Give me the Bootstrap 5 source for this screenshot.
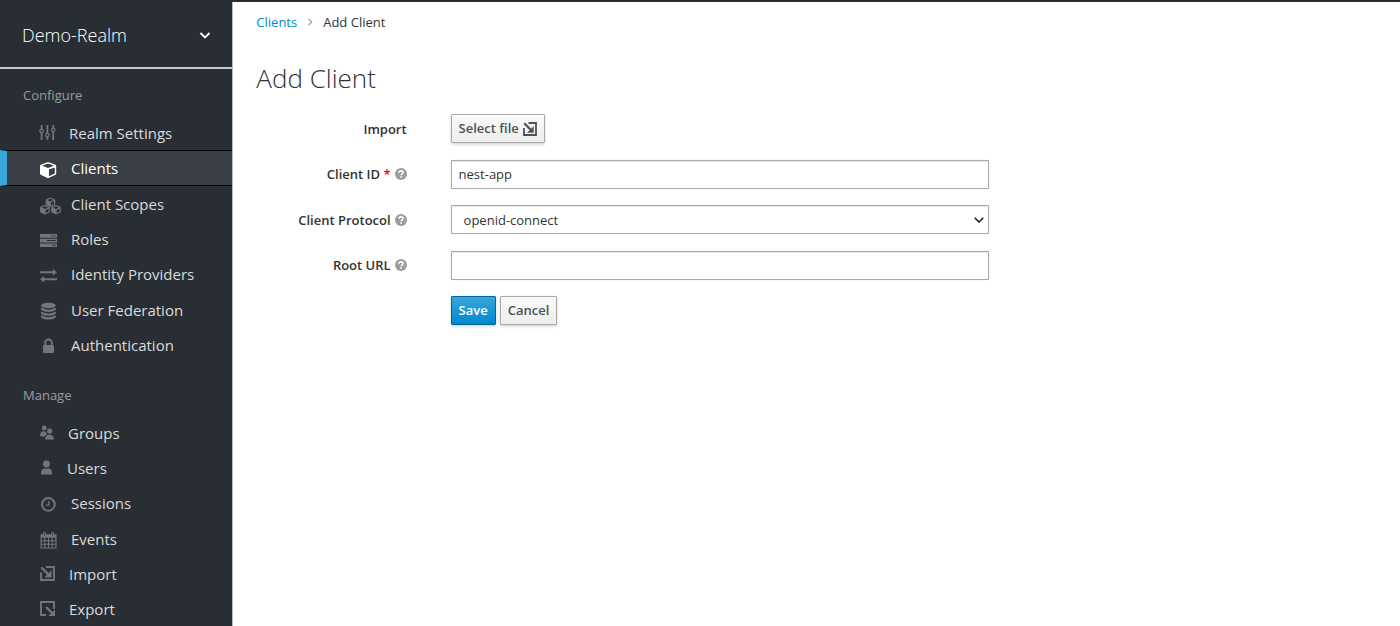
<!DOCTYPE html>
<html lang="en">
<head>
<meta charset="utf-8">
<meta name="viewport" content="width=device-width, initial-scale=1">
<title>Add Client</title>
<link href="https://cdn.jsdelivr.net/npm/bootstrap@5.3.0/dist/css/bootstrap.min.css" rel="stylesheet">
<style>
body { font-family: "Open Sans", "Noto Sans", sans-serif; font-size: 13px; line-height: 20px; color: #333; border-top: 2px solid #2b2b2b; }
.side-bar { background: #292e34; border-right: 1px solid #bbb; overflow-y: auto; scrollbar-width: none; }
.side-bar::-webkit-scrollbar { display: none; }
.realm-toggle { height: 67px; padding: 0 20px 0 22px; font-size: 18px; font-weight: 300; color: #fff; background: none; border: 0; border-bottom: 2px solid #c8c8c8; }
.side-title { margin: 0; padding: 16px 0 10px 23px; font-size: 13px; line-height: 20px; font-weight: 400; color: #9c9c9c; }
.side-list { display: grid; grid-auto-rows: 1fr; }
.list-configure { height: 248px; margin-bottom: 6px; }
.list-manage { height: 212px; }
.side-list a { display: flex; align-items: center; gap: 15px; height: 100%; padding-left: 40px; font-size: 15px; color: #dbdbdb; text-decoration: none; }
.side-list svg { flex: none; height: 22px; overflow: visible; fill: #72767b; color: #72767b; }
.side-list a.active { padding-left: 33px; color: #fff; background: #393f44; border-top: 1px solid #030303; border-bottom: 1px solid #030303; border-left: 7px solid #39a5dc; }
.side-list a.active svg { fill: #fff; color: #fff; }
.main-pane { padding: 10px 22px 10px 23px; }
.crumbs { gap: 10px; color: #333; }
.crumbs a { color: #0088ce; text-decoration: none; }
.page-title { margin: 29px 0 19px; font-size: 26px; line-height: 34px; font-weight: 300; }
.client-form { min-height: 211px; }
.client-form .row { --bs-gutter-x: 44px; }
.client-form label, .row-label { font-weight: 600; white-space: nowrap; }
.required-mark { color: #f00; }
.client-form .form-control, .client-form .form-select { height: 29px; padding: 3px 7px; font-size: 13px; line-height: 20px; color: #333; border: 1px solid #aaa; border-radius: 1px; box-shadow: inset 0 1px 1px rgba(3,3,3,.1), 0 0 1px rgba(3,3,3,.3); }
.client-form .form-select { padding-left: 12px; background-size: 10px 6px; background-position: right 4px center; background-image: url("data:image/svg+xml,%3Csvg xmlns='http://www.w3.org/2000/svg' viewBox='0 0 10 6'%3E%3Cpath d='M.7.7 5 5 9.3.7' fill='none' stroke='%23222' stroke-width='1.6'/%3E%3C/svg%3E"); }
.client-form .btn { height: 29px; padding: 3px 7px; font-size: 13px; line-height: 21px; font-weight: 600; border-width: 1px; border-radius: 1px; box-shadow: 0 0 1px rgba(3,3,3,.3), 0 2px 3px rgba(3,3,3,.12); }
.client-form .btn-plain { color: #4d5258; background: linear-gradient(#fafafa, #ededed); border-color: #aaa; }
.client-form .btn-save { color: #fff; background: linear-gradient(#39a5dc, #0088ce); border-color: #00659c; }
</style>
</head>
<body>
<svg class="d-none" aria-hidden="true">
  <symbol id="help" viewBox="0 0 12 12"><circle cx="6" cy="6" r="6" fill="#9c9c9c"/><path d="M4 4.7C4 3.4 4.9 2.9 6 2.9s2 .7 2 1.7C8 5.800 6.200 5.800 6.200 7.200" fill="none" stroke="#fff" stroke-width="1.600"/><path d="M5.300 8.200h1.700v1.600H5.300z" fill="#fff"/></symbol>
  <symbol id="import" viewBox="0 0 14 14"><path d="M5.500 1H13v12H1V6" fill="none" stroke="currentColor" stroke-width="1.800"/><path d="M1.200 1.200 8 8" fill="none" stroke="currentColor" stroke-width="2.200"/><path d="M10.700 4v6.700H4l2.400-2.300 2-2z" fill="currentColor"/></symbol>
</svg>
<div class="container-fluid vh-100 overflow-hidden">
<div class="row h-100">
  <nav class="side-bar col-2 h-100 p-0" aria-label="Realm">
    <button type="button" class="realm-toggle w-100 d-flex align-items-center justify-content-between">Demo-Realm
      <svg width="14" height="10" viewBox="0 0 14 10"><path d="M2.500 3 7 7.500 11.500 3" fill="none" stroke="#fff" stroke-width="1.800"/></svg>
    </button>
    <h2 class="side-title">Configure</h2>
    <ul class="side-list list-configure list-unstyled">
      <li><a href="#"><svg width="14"><path d="M1.600 3v15M7.400 3v15M13.200 3v15" stroke="currentColor" stroke-width="1.800"/><g stroke="currentColor" stroke-width="1.300" fill="#292e34"><circle cx="1.600" cy="9" r="1.700"/><circle cx="7.400" cy="13" r="1.700"/><circle cx="13.200" cy="8" r="1.700"/></g></svg>Realm Settings</a></li>
      <li><a href="#" class="active"><svg width="16"><path fill-rule="evenodd" d="M8 5 15.400 7.800q.8.3.8 1.200v7.600q0 .8-.7 1.200L8 21.300.7 17.800Q0 17.400 0 16.600V9q0-.9.8-1.200zM8 6.600 2.200 8.800 8 11 14 8.800zM9 12.600v6.600l5.800-2.800v-6z"/></svg>Clients</a></li>
      <li><a href="#"><svg width="16"><g fill-rule="evenodd"><path d="M10.400 4.500 15.200 6.600V11.700L10.400 14 5.700 11.700V6.600zM10.400 5.800 7.400 7.100 10.400 8.400 13.500 7.100zM11 9.500v3.100l3-1.400V8.200z"/><path d="M4.900 12 9.800 14.100V19.200L4.900 21.500.1 19.200V14.100zM4.900 13.300 1.900 14.600 4.900 15.900 8 14.600zM5.500 17v3.100l3-1.400V15.700z"/><path d="M16 12 20.800 14.100V19.200L16 21.500 11.200 19.200V14.100zM16 13.300 13 14.600 16 15.900 19.100 14.600zM16.600 17v3.100l3-1.400V15.700z"/></g></svg>Client Scopes</a></li>
      <li><a href="#"><svg width="16"><path fill-rule="evenodd" d="M0 6h17v3.700H0zM11 7.400v.9h4.800v-.9zM0 10.700h17v3.700H0zM7 12.100v.9h8.800v-.9zM0 15.400h17v3.700H0zM12.500 16.800v.9h3.300v-.9z"/></svg>Roles</a></li>
      <li><a href="#"><svg width="16"><path d="M0 8.200h12.800V6L17 9.200l-4.200 3.200v-2.200H0zM17 15.200H4.200V13L0 16.200l4.200 3.200v-2.200H17z"/></svg>Identity Providers</a></li>
      <li><a href="#"><svg width="16"><ellipse cx="8.400" cy="6.500" rx="7.400" ry="2.800"/><path d="M1 8.600Q8.400 12.700 15.800 8.600v2q-2 2.300-7.400 2.300T1 10.600zM1 12.400q7.400 4.100 14.800 0v2q-2 2.300-7.400 2.300T1 14.400zM1 16.200q7.400 4.100 14.800 0v2q-2 2.300-7.400 2.300T1 18.200z"/></svg>User Federation</a></li>
      <li><a href="#"><svg width="16"><path d="M5.200 12V8.800a3.300 3.300 0 0 1 6.600 0V12" fill="none" stroke="currentColor" stroke-width="1.900"/><rect x="3" y="11" width="11" height="8" rx="1"/></svg>Authentication</a></li>
    </ul>
    <h2 class="side-title">Manage</h2>
    <ul class="side-list list-manage list-unstyled mb-0">
      <li><a href="#"><svg width="13"><circle cx="4.300" cy="6" r="2.400"/><circle cx="9.600" cy="9" r="2.600"/><path d="M0 13.600Q.4 9.300 3.500 9.300q1.600 0 2.500 1.100.5 1.500 1.100 2-2 .4-2.800 2.300L0 14zM5 17.600q.2-4.900 4.400-4.900T14 17.600z"/></svg>Groups</a></li>
      <li><a href="#"><svg width="12"><circle cx="6.500" cy="7" r="3.400"/><path d="M1 17.600q.2-6.300 3.700-6.300 1.800 1 3.700 0 3.500 0 3.800 6.300z"/></svg>Users</a></li>
      <li><a href="#"><svg width="16"><circle cx="8.400" cy="12.400" r="6.300" fill="none" stroke="currentColor" stroke-width="2"/><path d="M8.900 8.800v4.400H6" fill="none" stroke="currentColor" stroke-width="1.300"/></svg>Sessions</a></li>
      <li><a href="#"><svg width="16"><path fill-rule="evenodd" d="M.5 6.200H3V5.600q0-1.800 1.500-1.800T6 5.600V6.200h5V5.600q0-1.800 1.500-1.800T14 5.600v.6h2.500V20.500H.5zM1.600 9.800v2.500h2.700V9.800zM5.300 9.800v2.500h2.700V9.800zM9 9.800v2.500h2.700V9.800zM12.700 9.800v2.500h2.700V9.800zM1.600 13.300v2.500h2.700v-2.500zM5.300 13.300v2.500h2.700v-2.500zM9 13.300v2.500h2.700v-2.500zM12.700 13.300v2.500h2.700v-2.500zM1.600 16.800v2.700h2.700v-2.700zM5.300 16.800v2.700h2.700v-2.700zM9 16.800v2.700h2.700v-2.700zM12.700 16.800v2.700h2.700v-2.700zM4.100 5v2.700h.8V5zM12.100 5v2.700h.8V5z"/></svg>Events</a></li>
      <li><a href="#"><svg width="14"><use href="#import" y="3" width="15" height="15"/></svg>Import</a></li>
      <li><a href="#"><svg width="14"><path d="M6 17H1V4h13v7" fill="none" stroke="currentColor" stroke-width="1.900"/><path d="M6 9l7 7" stroke="currentColor" stroke-width="2.400"/><path d="M15 11.500V18H8.500z"/></svg>Export</a></li>
    </ul>
  </nav>
  <main class="main-pane col-10">
    <nav class="crumbs d-flex align-items-center" aria-label="breadcrumb">
      <a href="#">Clients</a>
      <svg width="6" height="8" viewBox="0 0 6 8"><path d="M1.500.8 4.700 4 1.500 7.200" fill="none" stroke="#9c9c9c" stroke-width="1.200"/></svg>
      <span>Add Client</span>
    </nav>
    <h1 class="page-title">Add Client</h1>
    <form class="client-form d-flex flex-column justify-content-between">
      <div class="row align-items-center">
        <div class="row-label col-2 text-end">Import</div>
        <div class="col-6"><button type="button" class="btn btn-plain d-flex align-items-center gap-1">Select file <svg width="14" height="14"><use href="#import"/></svg></button></div>
      </div>
      <div class="row align-items-center">
        <div class="col-2 d-flex align-items-center justify-content-end gap-1"><label for="clientId">Client ID <span class="required-mark">*</span></label><svg class="flex-shrink-0" width="12" height="12"><use href="#help"/></svg></div>
        <div class="col-6"><input id="clientId" type="text" class="form-control" value="nest-app"></div>
      </div>
      <div class="row align-items-center">
        <div class="col-2 d-flex align-items-center justify-content-end gap-1"><label for="protocol">Client Protocol</label><svg class="flex-shrink-0" width="12" height="12"><use href="#help"/></svg></div>
        <div class="col-6"><select id="protocol" class="form-select"><option>openid-connect</option><option>saml</option></select></div>
      </div>
      <div class="row align-items-center">
        <div class="col-2 d-flex align-items-center justify-content-end gap-1"><label for="rootUrl">Root URL</label><svg class="flex-shrink-0" width="12" height="12"><use href="#help"/></svg></div>
        <div class="col-6"><input id="rootUrl" type="text" class="form-control"></div>
      </div>
      <div class="row">
        <div class="col-6 offset-2 d-flex gap-1"><button type="submit" class="btn btn-save">Save</button><button type="button" class="btn btn-plain">Cancel</button></div>
      </div>
    </form>
  </main>
</div>
</div>
<script src="https://cdn.jsdelivr.net/npm/bootstrap@5.3.0/dist/js/bootstrap.bundle.min.js"></script>
</body>
</html>
